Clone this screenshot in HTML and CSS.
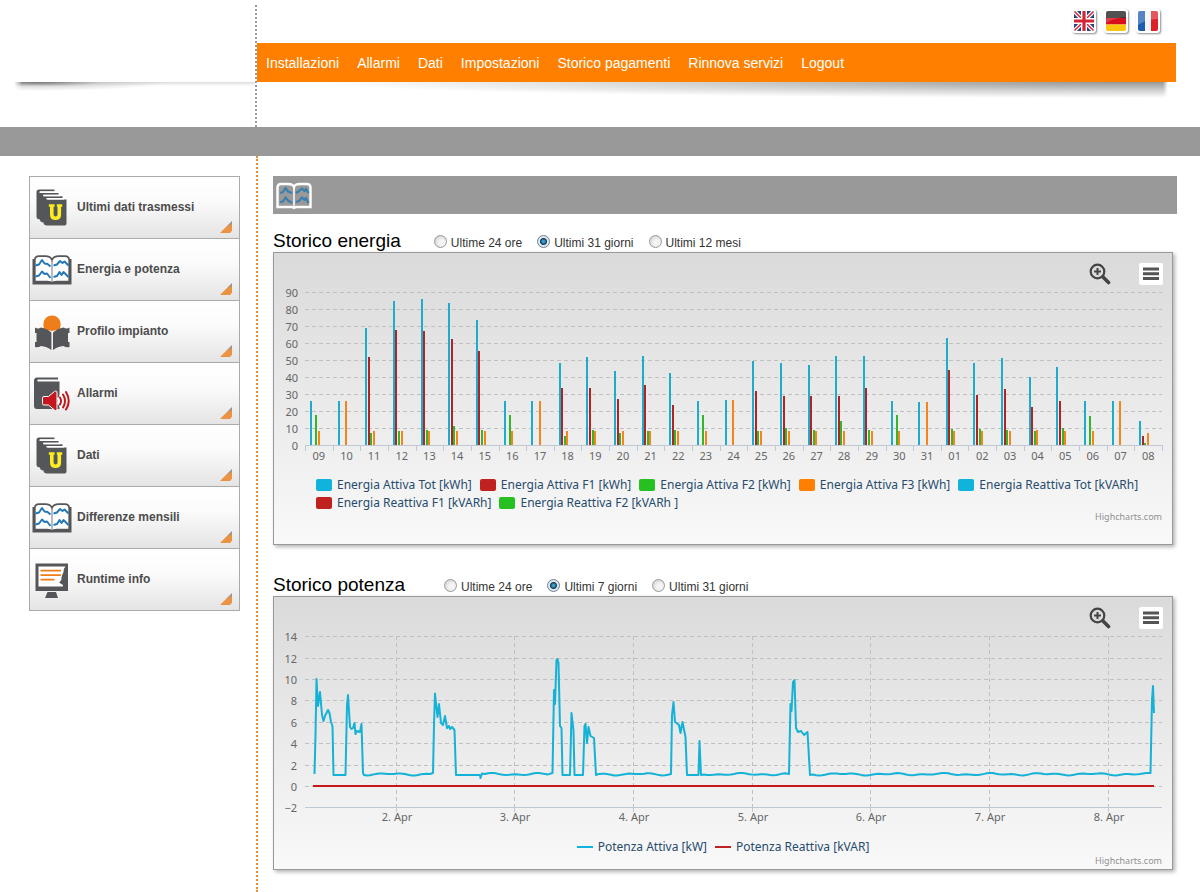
FILE: index.html
```html
<!DOCTYPE html>
<html lang="it">
<head>
<meta charset="utf-8">
<meta name="viewport" content="width=device-width, initial-scale=1">
<title>Energia e potenza</title>
<link rel="stylesheet" href="styles.css">
</head>
<body>
<svg class="sprite" aria-hidden="true">
  <symbol id="i-books" viewBox="0 0 40 40">
    <path fill="#54565a" d="M4.500 5Q4.500 2.500 7 2.500H22.500V4.300H8V6H26.500V7.700H12V9.200H30.500V11H15.500V12.500H34.500V36.500Q34.500 38.500 32.500 38.500H15Q11.500 38.500 11.500 35.500Q8 35.500 8 32.500Q4.500 32.500 4.500 29.500Z"/>
    <path fill="none" stroke="#fff" stroke-width="1.500" d="M7.500 5.200H24M11 8.500H28M14.500 11.700H32"/>
    <path fill="none" stroke="#fbed21" stroke-width="3.600" d="M19.800 19V27.500Q19.800 31.300 23.500 31.300Q27.300 31.300 27.300 27.500V19"/>
    <path fill="none" stroke="#fbed21" stroke-width="2.600" d="M16.800 18.500H22.600M24.800 18.500H30.200"/>
  </symbol>
  <symbol id="i-graph" viewBox="0 0 40 40">
    <path fill="#54565a" d="M0.500 10H39.500V35.500H0.500Z"/>
    <path fill="#fff" stroke="#54565a" stroke-width="1.700" d="M2.800 11Q3 7.200 7 7.200H13Q18.500 7.200 20 11Q21.500 7.200 27 7.200H33Q37 7.200 37.200 11V32.500H25Q21 32.500 20 34Q19 32.500 15 32.500H2.800Z"/>
    <path stroke="#8b8d90" stroke-width="1.200" d="M20 11V33"/>
    <path fill="none" stroke="#2479b8" stroke-width="2" stroke-linejoin="round" d="M3.500 16.500L7 15.500L10 11L12.500 14.500L15.500 15L18.500 17.500M21.500 16.500L25 15.500L28 12L30.500 14L32.500 12.500L36.500 16.500M3.500 27.500L7 26.500L10 22.500L12.500 25L15 24.500L18.500 29M21.500 28L25 27L27.500 23L29.500 26L31.500 23L36.500 28"/>
  </symbol>
  <symbol id="i-profile" viewBox="0 0 40 40">
    <path fill="#ef7d1a" d="M13 18.500Q11 17 11.500 12Q13 4.500 20 4.500Q27 4.500 28.500 12Q29 17 27 18.500L20 20Z"/>
    <path fill="#54565a" d="M3 16.500Q6 18.500 9 16.500Q15 17.500 19.400 21.500V39Q15 35.500 9 35Q6 37 3 36V31H4.500V22H3ZM37.500 16.500Q34.500 18.500 31.500 16.500Q25.500 17.500 21 21.500V39Q25.500 35.500 31.500 35Q34.500 37 37.500 36V31H36V22H37.500Z"/>
  </symbol>
  <symbol id="i-alarm" viewBox="0 0 40 40">
    <path fill="#54565a" d="M2 8Q2 4.500 5 4.500H26V6.500H5.500V8.500H27.500V36H5Q2 36 2 33Z"/>
    <path fill="none" stroke="#fff" stroke-width="4.500" d="M27 24Q29 28 27 32M29 21Q33.500 28 29 35"/>
    <path fill="#c4161c" stroke="#fff" stroke-width="1" d="M10.500 25Q10.500 23.500 12 23.500H16.500L22.500 18.500Q25 17 25 20V35.500Q25 38.500 22.500 37L16.500 32H12Q10.500 32 10.500 30.500Z"/>
    <path fill="none" stroke="#c4161c" stroke-width="2" stroke-linecap="round" d="M28 24.500Q30 28 28 31.500M31 21.500Q35 28 31 34.500M34 19Q39.500 28 34 36.500"/>
  </symbol>
  <symbol id="i-monitor" viewBox="0 0 40 40">
    <path fill="#54565a" d="M3.500 4.500H36V32H3.500ZM15.500 33H24L26 39H13Z"/>
    <path fill="#fff" d="M6.500 7.500H33.500Q31 10 31.500 13Q29 18 29.500 20.500Q28 23 27 23.500L31 26V27.500H6.500Z"/>
    <path stroke="#ef7d1a" stroke-width="1.700" d="M8.500 11.700H29M8.500 16.200H29M8.500 20.700H22.500"/>
  </symbol>
  <symbol id="i-zoom" viewBox="0 0 22 22">
    <circle cx="8.500" cy="8.500" r="6.800" fill="none" stroke="#444" stroke-width="2.200"/>
    <path stroke="#444" stroke-width="2" d="M5 8.500H12M8.500 5V12"/>
    <path stroke="#444" stroke-width="3.600" stroke-linecap="round" d="M14.500 14.500L19.500 19.500"/>
  </symbol>
  <symbol id="i-menu" viewBox="0 0 24 22">
    <path stroke="#555" stroke-width="3" d="M4 6H20M4 10.700H20M4 15.400H20"/>
  </symbol>
</svg>

<header class="top">
  <div class="logo"></div>
  <div class="top-main">
    <div class="flags">
      <a href="#en" aria-label="English"><svg viewBox="0 0 20 20"><path fill="#27427f" d="M0 0H20V20H0Z"/><path stroke="#fff" stroke-width="4" d="M0 0L20 20M20 0L0 20"/><path stroke="#d22637" stroke-width="1.500" d="M0 0L20 20M20 0L0 20"/><path stroke="#fff" stroke-width="6" d="M10 0V20M0 10H20"/><path stroke="#d22637" stroke-width="3.200" d="M10 0V20M0 10H20"/></svg></a>
      <a href="#de" aria-label="Deutsch"><svg viewBox="0 0 20 20"><path fill="#2b2b2b" d="M0 0H20V7H0Z"/><path fill="#d8101c" d="M0 7H20V13.500H0Z"/><path fill="#fbc70c" d="M0 13.500H20V20H0Z"/><path fill="#fff" opacity=".18" d="M0 0H20V6Q8 7 0 12Z"/></svg></a>
      <a href="#fr" aria-label="Français"><svg viewBox="0 0 20 20"><path fill="#1c5cb0" d="M0 0H7V20H0Z"/><path fill="#f4f4f4" d="M7 0H13V20H7Z"/><path fill="#dd1f28" d="M13 0H20V20H13Z"/><path fill="#fff" opacity=".25" d="M0 0H20V8Q8 8 0 14Z"/></svg></a>
    </div>
    <nav class="nav">
      <a href="#">Installazioni</a><a href="#">Allarmi</a><a href="#">Dati</a><a href="#">Impostazioni</a><a href="#">Storico pagamenti</a><a href="#">Rinnova servizi</a><a href="#">Logout</a>
    </nav>
    <div class="nav-shadow"></div>
  </div>
</header>
<div class="strip"></div>

<div class="layout">
  <aside class="side">
    <nav class="menu">
      <a href="#"><svg><use href="#i-books"/></svg><span>Ultimi dati trasmessi</span></a>
      <a href="#"><svg><use href="#i-graph"/></svg><span>Energia e potenza</span></a>
      <a href="#"><svg><use href="#i-profile"/></svg><span>Profilo impianto</span></a>
      <a href="#"><svg><use href="#i-alarm"/></svg><span>Allarmi</span></a>
      <a href="#"><svg><use href="#i-books"/></svg><span>Dati</span></a>
      <a href="#"><svg><use href="#i-graph"/></svg><span>Differenze mensili</span></a>
      <a href="#"><svg><use href="#i-monitor"/></svg><span>Runtime info</span></a>
    </nav>
  </aside>

  <main class="content">
    <div class="page-bar">
      <svg viewBox="0 0 36 28" aria-hidden="true"><path fill="#999" stroke="#fff" stroke-width="2.400" d="M1.500 5Q2 2 5 2H12Q17 2 18 5Q19 2 24 2H31Q34 2 34.500 5V25H20L18 26L16 25H1.500Z"/><path stroke="#fff" stroke-width="1.500" d="M18 5V25"/><path fill="none" stroke="#3b7fae" stroke-width="2.200" stroke-linejoin="round" d="M4 11L7 10L9.500 6L12 9.500L16 11M20 11L23 9L26 6.500L28.500 9L30 7L32.500 11M4 20L7 19.500L9.500 15.500L12 18.500L16 21M20 20L23 19L26 15.500L28.500 18L30 16L32.500 21"/></svg>
    </div>

    <section>
      <div class="chart-head">
        <h2>Storico energia</h2>
        <div class="ranges">
          <label><input type="radio" name="energy">Ultime 24 ore</label>
          <label><input type="radio" name="energy" checked>Ultimi 31 giorni</label>
          <label><input type="radio" name="energy">Ultimi 12 mesi</label>
        </div>
      </div>
      <div class="card card-energy">
        <div class="tools">
          <button class="tool" aria-label="Zoom"><svg viewBox="0 0 22 22"><use href="#i-zoom"/></svg></button>
          <button class="tool tool-menu" aria-label="Menu"><svg viewBox="0 0 24 22"><use href="#i-menu"/></svg></button>
        </div>
        <svg class="plot" id="energy" viewBox="0 0 898 182" role="img" aria-label="Storico energia"></svg>
        <ul class="legend">
          <li><i class="box c-blue"></i>Energia Attiva Tot [kWh]</li>
          <li><i class="box c-red"></i>Energia Attiva F1 [kWh]</li>
          <li><i class="box c-green"></i>Energia Attiva F2 [kWh]</li>
          <li><i class="box c-orange"></i>Energia Attiva F3 [kWh]</li>
          <li><i class="box c-blue"></i>Energia Reattiva Tot [kVARh]</li>
          <li><i class="box c-red"></i>Energia Reattiva F1 [kVARh]</li>
          <li><i class="box c-green"></i>Energia Reattiva F2 [kVARh ]</li>
        </ul>
        <a class="credit" href="#">Highcharts.com</a>
      </div>
    </section>

    <section>
      <div class="chart-head chart-head-power">
        <h2>Storico potenza</h2>
        <div class="ranges">
          <label><input type="radio" name="power">Ultime 24 ore</label>
          <label><input type="radio" name="power" checked>Ultimi 7 giorni</label>
          <label><input type="radio" name="power">Ultimi 31 giorni</label>
        </div>
      </div>
      <div class="card card-power">
        <div class="tools">
          <button class="tool" aria-label="Zoom"><svg viewBox="0 0 22 22"><use href="#i-zoom"/></svg></button>
          <button class="tool tool-menu" aria-label="Menu"><svg viewBox="0 0 24 22"><use href="#i-menu"/></svg></button>
        </div>
        <svg class="plot" id="power" viewBox="274 630 898 200" role="img" aria-label="Storico potenza"></svg>
        <ul class="legend legend-center">
          <li><i class="dash c-blue"></i>Potenza Attiva [kW]</li>
          <li><i class="dash c-red"></i>Potenza Reattiva [kVAR]</li>
        </ul>
        <a class="credit" href="#">Highcharts.com</a>
      </div>
    </section>
  </main>
</div>
<script src="charts.js"></script>
</body>
</html>
```

FILE: styles.css
```css
* { box-sizing: border-box; }
body {
  margin: 0;
  min-height: 100vh;
  display: flex;
  flex-direction: column;
  background: #fff;
  font-family: "Liberation Sans", Arial, sans-serif;
}
a { color: inherit; text-decoration: none; }
.sprite { display: none; }

.top { display: flex; height: 127px; padding-top: 5px; }
.logo {
  position: relative;
  width: 257px;
  border-right: 2px dotted #999;
}
.logo::after {
  content: "";
  position: absolute;
  left: 14px;
  right: 0;
  top: 77px;
  height: 12px;
  background:
    radial-gradient(ellipse 130px 9px at 24px 0, rgba(80,80,80,.75), rgba(150,150,150,.3) 50%, transparent),
    linear-gradient(rgba(140,140,140,.3), transparent 4px);
  mask-image: linear-gradient(90deg, transparent, #000 8px);
}
.top-main { flex: 1; padding-right: 24px; }
.flags { display: flex; justify-content: flex-end; gap: 8px; height: 38px; padding: 4px 16px 0 0; }
.flags a {
  width: 24px;
  height: 24px;
  padding: 2px;
  background: #fff;
  border-radius: 3px;
  box-shadow: 1px 1px 2px rgba(0,0,0,.45);
}
.flags svg { display: block; width: 20px; height: 20px; border-radius: 2px; }
.nav {
  display: flex;
  gap: 18px;
  height: 39px;
  align-items: center;
  padding: 0 9px;
  background: #ff7f00;
  color: #fff;
  font-size: 14px;
  line-height: 16px;
}
.nav-shadow {
  height: 32px;
  margin-right: 8px;
  background: radial-gradient(ellipse 90% 16px at 96% 0, rgba(80,80,80,.6), rgba(130,130,130,.35) 55%, transparent);
  mask-image: linear-gradient(270deg, transparent, #000 5px);
}
.strip { height: 29px; background: #999; }

.layout { flex: 1; display: flex; }
.side {
  width: 258px;
  flex: none;
  padding: 20px 18px 0 29px;
  border-right: 2px dotted #f08a2e;
}
.menu { width: 211px; border: 1px solid #aaa; border-top: 0; }
.menu a {
  position: relative;
  display: flex;
  align-items: center;
  gap: 5px;
  height: 62px;
  padding: 0 2px 2px;
  border-top: 1px solid #aaa;
  background: linear-gradient(#fff, #fbfbfb 40%, #e4e4e4);
  color: #4c4c4c;
  font-size: 12px;
  font-weight: bold;
}
.menu svg { width: 40px; height: 40px; }
.menu a::after {
  content: "";
  position: absolute;
  right: 7px;
  bottom: 5px;
  width: 12px;
  height: 12px;
  background: linear-gradient(160deg, #8f8f8f 35%, #ec9243 55%);
  clip-path: polygon(100% 0, 100% 80%, 85% 100%, 0 100%);
}

.content { flex: 1; min-width: 0; padding: 20px 23px 20px 15px; }
.page-bar { height: 38px; padding: 6px 3px; background: #999; }
.page-bar svg { display: block; width: 36px; height: 28px; }
.chart-head { display: flex; align-items: flex-end; gap: 33px; height: 38px; }
.chart-head-power { height: 51px; gap: 39px; }
.chart-head h2 { margin: 0; font-size: 19px; line-height: 22px; font-weight: normal; }
.ranges { display: flex; gap: 15px; font-size: 12px; line-height: 14px; color: #333; padding-bottom: 2px; }
.ranges label { display: flex; align-items: center; gap: 4px; }
.ranges input {
  appearance: none;
  width: 13px;
  height: 13px;
  margin: 0 0 2px;
  border: 1px solid #9a9b9b;
  border-radius: 50%;
  background: radial-gradient(circle at 60% 60%, #f4f4f4 30%, #c4c4c4);
}
.ranges input:checked {
  border-color: #6b7f90;
  background: radial-gradient(circle, #3da0cf 1px, #123a5c 3px, #e0e8ee 4px);
}

.card {
  margin-right: 4px;
  border: 1px solid #999;
  background: linear-gradient(#dadada, #f9f9f9);
  box-shadow: 2px 2px 4px rgba(0,0,0,.3);
  font-family: "Noto Sans", "Open Sans", sans-serif;
}
.card-energy { padding-bottom: 22px; }
.card-power { padding-bottom: 3px; }
.tools { display: flex; justify-content: flex-end; gap: 28px; padding: 10px 9px 1px; }
.tool { width: 22px; height: 22px; padding: 0; border: 0; background: none; }
.tool-menu { width: 24px; background: #fff; border-radius: 2px; }
.tool svg { display: block; width: 100%; height: 100%; }
.plot { display: block; width: 100%; height: auto; }
.plot text { font-size: 11px; fill: #666; }
.grid { stroke: #c0c0c0; stroke-dasharray: 4 3; fill: none; }
.axis { stroke: #c0c8d4; fill: none; }
.line-blue { fill: none; stroke: #14b2d6; stroke-width: 2; stroke-linejoin: round; }
.line-red { fill: none; stroke: #c4181c; stroke-width: 2; }
.bar0 { fill: #1eaccd; }
.bar1 { fill: #b02424; }
.bar2 { fill: #35b52a; }
.bar3 { fill: #f5841a; }

.legend {
  display: flex;
  flex-wrap: wrap;
  column-gap: 8px;
  margin: 0;
  padding: 8px 24px 0 42px;
  list-style: none;
  font-size: 12px;
  line-height: 18px;
  color: #274b6d;
}
.legend-center { justify-content: center; padding: 8px 18px 0; }
.legend li { display: flex; align-items: center; gap: 5px; white-space: nowrap; }
.box { width: 16px; height: 12px; border-radius: 2px; }
.dash { width: 16px; height: 2px; }
.c-blue { background: #0fb3dc; }
.c-red { background: #c02222; }
.c-green { background: #26c020; }
.c-orange { background: #ff7f00; }
.credit { display: block; padding-right: 10px; text-align: right; font-size: 9px; line-height: 10px; color: #909090; }
```

FILE: charts.js
```js
const NS = 'http://www.w3.org/2000/svg';
function add(parent, tag, attrs, text) {
  const el = document.createElementNS(NS, tag);
  for (const key in attrs) el.setAttribute(key, attrs[key]);
  if (text !== undefined) el.textContent = text;
  parent.appendChild(el);
}

// day, total, F1, F2, F3
const days = [
  ['09',26,0,17.5,8],['10',26,0,0,26],['11',68.5,51.5,7,8],['12',84.5,67.5,8,8],['13',85.5,67,9,8],
  ['14',83,62,11,8],['15',73.5,55,9,8],['16',26,0,17.5,8],['17',26,0,0,26],['18',48,33.5,5,8],
  ['19',51.5,33.5,9,8],['20',43.5,27,7,8],['21',52,35,8,8],['22',42.5,23.5,9,8],['23',26,0,17.5,8],
  ['24',26.5,0,0,26.5],['25',49.5,31.5,8,8],['26',48,29,10,8],['27',47,29,9,8],['28',52,28.5,14,8],
  ['29',52,33.5,9,8],['30',26,0,17.5,8],['31',25.5,0,0,25.5],['01',63,44,9.5,8],['02',48,29.5,9.5,8],
  ['03',51,33,9,8],['04',40,22.5,8,9],['05',46,26,10,8],['06',26,0,17,8],['07',26,0,0,26],['08',14,5.5,1,7]
];
const energy = document.getElementById('energy');
const step = 857 / days.length;
for (let v = 0; v <= 90; v += 10) {
  const y = Math.round(159 - v * 1.705) + 0.5;
  if (v) add(energy, 'path', { class: 'grid', d: `M31 ${y}H888` });
  add(energy, 'text', { x: 24, y: y + 4, 'text-anchor': 'end' }, v);
}
days.forEach(([name, ...values], i) => {
  const left = 31 + i * step;
  values.forEach((v, s) => {
    if (!v) return;
    const h = Math.round(v * 1.705);
    add(energy, 'rect', { class: 'bar' + s, x: Math.round(left + 5 + s * 2.55), y: 159 - h, width: 2, height: h });
  });
  add(energy, 'path', { class: 'axis', d: `M${Math.round(left) + 0.5} 159V165` });
  add(energy, 'text', { x: left + step / 2, y: 174, 'text-anchor': 'middle' }, name);
});
add(energy, 'path', { class: 'axis', d: 'M31 159.5H888.5V165' });

const power = document.getElementById('power');
for (let v = -2; v <= 14; v += 2) {
  const y = Math.round(786 - v * 10.7) + 0.5;
  add(power, 'path', { class: v === -2 ? 'axis' : 'grid', d: `M305 ${y}H1162` });
  add(power, 'text', { x: 297, y: y + 4, 'text-anchor': 'end' }, v < 0 ? '\u2212' + -v : v);
}
for (let d = 2; d <= 8; d++) {
  const x = Math.round(395.5 + (d - 2) * 118.7) + 0.5;
  add(power, 'path', { class: 'grid', d: `M${x} 636V807` });
  add(power, 'path', { class: 'axis', d: `M${x} 807V812` });
  add(power, 'text', { x: x + 0.5, y: 821, 'text-anchor': 'middle' }, d + '. Apr');
}
// idle stretches between the peaks hover around 1 kW
function idle(from, to) {
  let out = '';
  for (let x = from; x <= to; x += 3) {
    const wave = Math.sin(x / 3.6) * 0.6 + Math.sin(x / 8) * 0.7;
    out += `L${x} ${(774.2 + wave).toFixed(1)}`;
  }
  return out;
}
const active =
  'M314.500 774L315.500 735L316.500 679L318 706L320 692L322 715L323.500 721L325 716L328 710L329.500 713L331 722L332.500 726L333.500 775H345.500' +
  'L347 705L348 695L350 727L351.500 729L353 728L354.500 723L355.500 734L357 731L360 732L361.500 724L363 773L364 775' + idle(367, 430) +
  'L433 773L434 725L435 693.500L437.500 717L439 704L441 723L443 725L445 716L447 728L449 726L450 729L452 727L454.500 730L456 775H480L480.500 778L482 773.500' + idle(485, 550) +
  'L552.500 773L554 690L555 704L556.500 660L557.500 659L558.500 663L560 726L561.500 728L562.500 775H570L571.500 713L573.500 731L574.500 775H583' +
  'L584.500 726L585.500 724L587 743L588.500 727L590.500 736L594 738L596 775' + idle(599, 668) +
  'L671 774L672 715L673.500 702L675 722L679 725L680.500 733L682.500 722L685.500 737L687 775H698.500L699.500 741L701 775' + idle(704, 786) +
  'L789 774L790.500 704L791.500 711L793 682L794.500 680L796 728L798 732L801 731L804 735L807.500 732L810 775' + idle(813, 1147) +
  'L1150.500 773L1152 700L1153 686L1154 713';
add(power, 'path', { class: 'line-blue', d: active });
add(power, 'path', { class: 'line-red', d: 'M313 786H1154' });
```
